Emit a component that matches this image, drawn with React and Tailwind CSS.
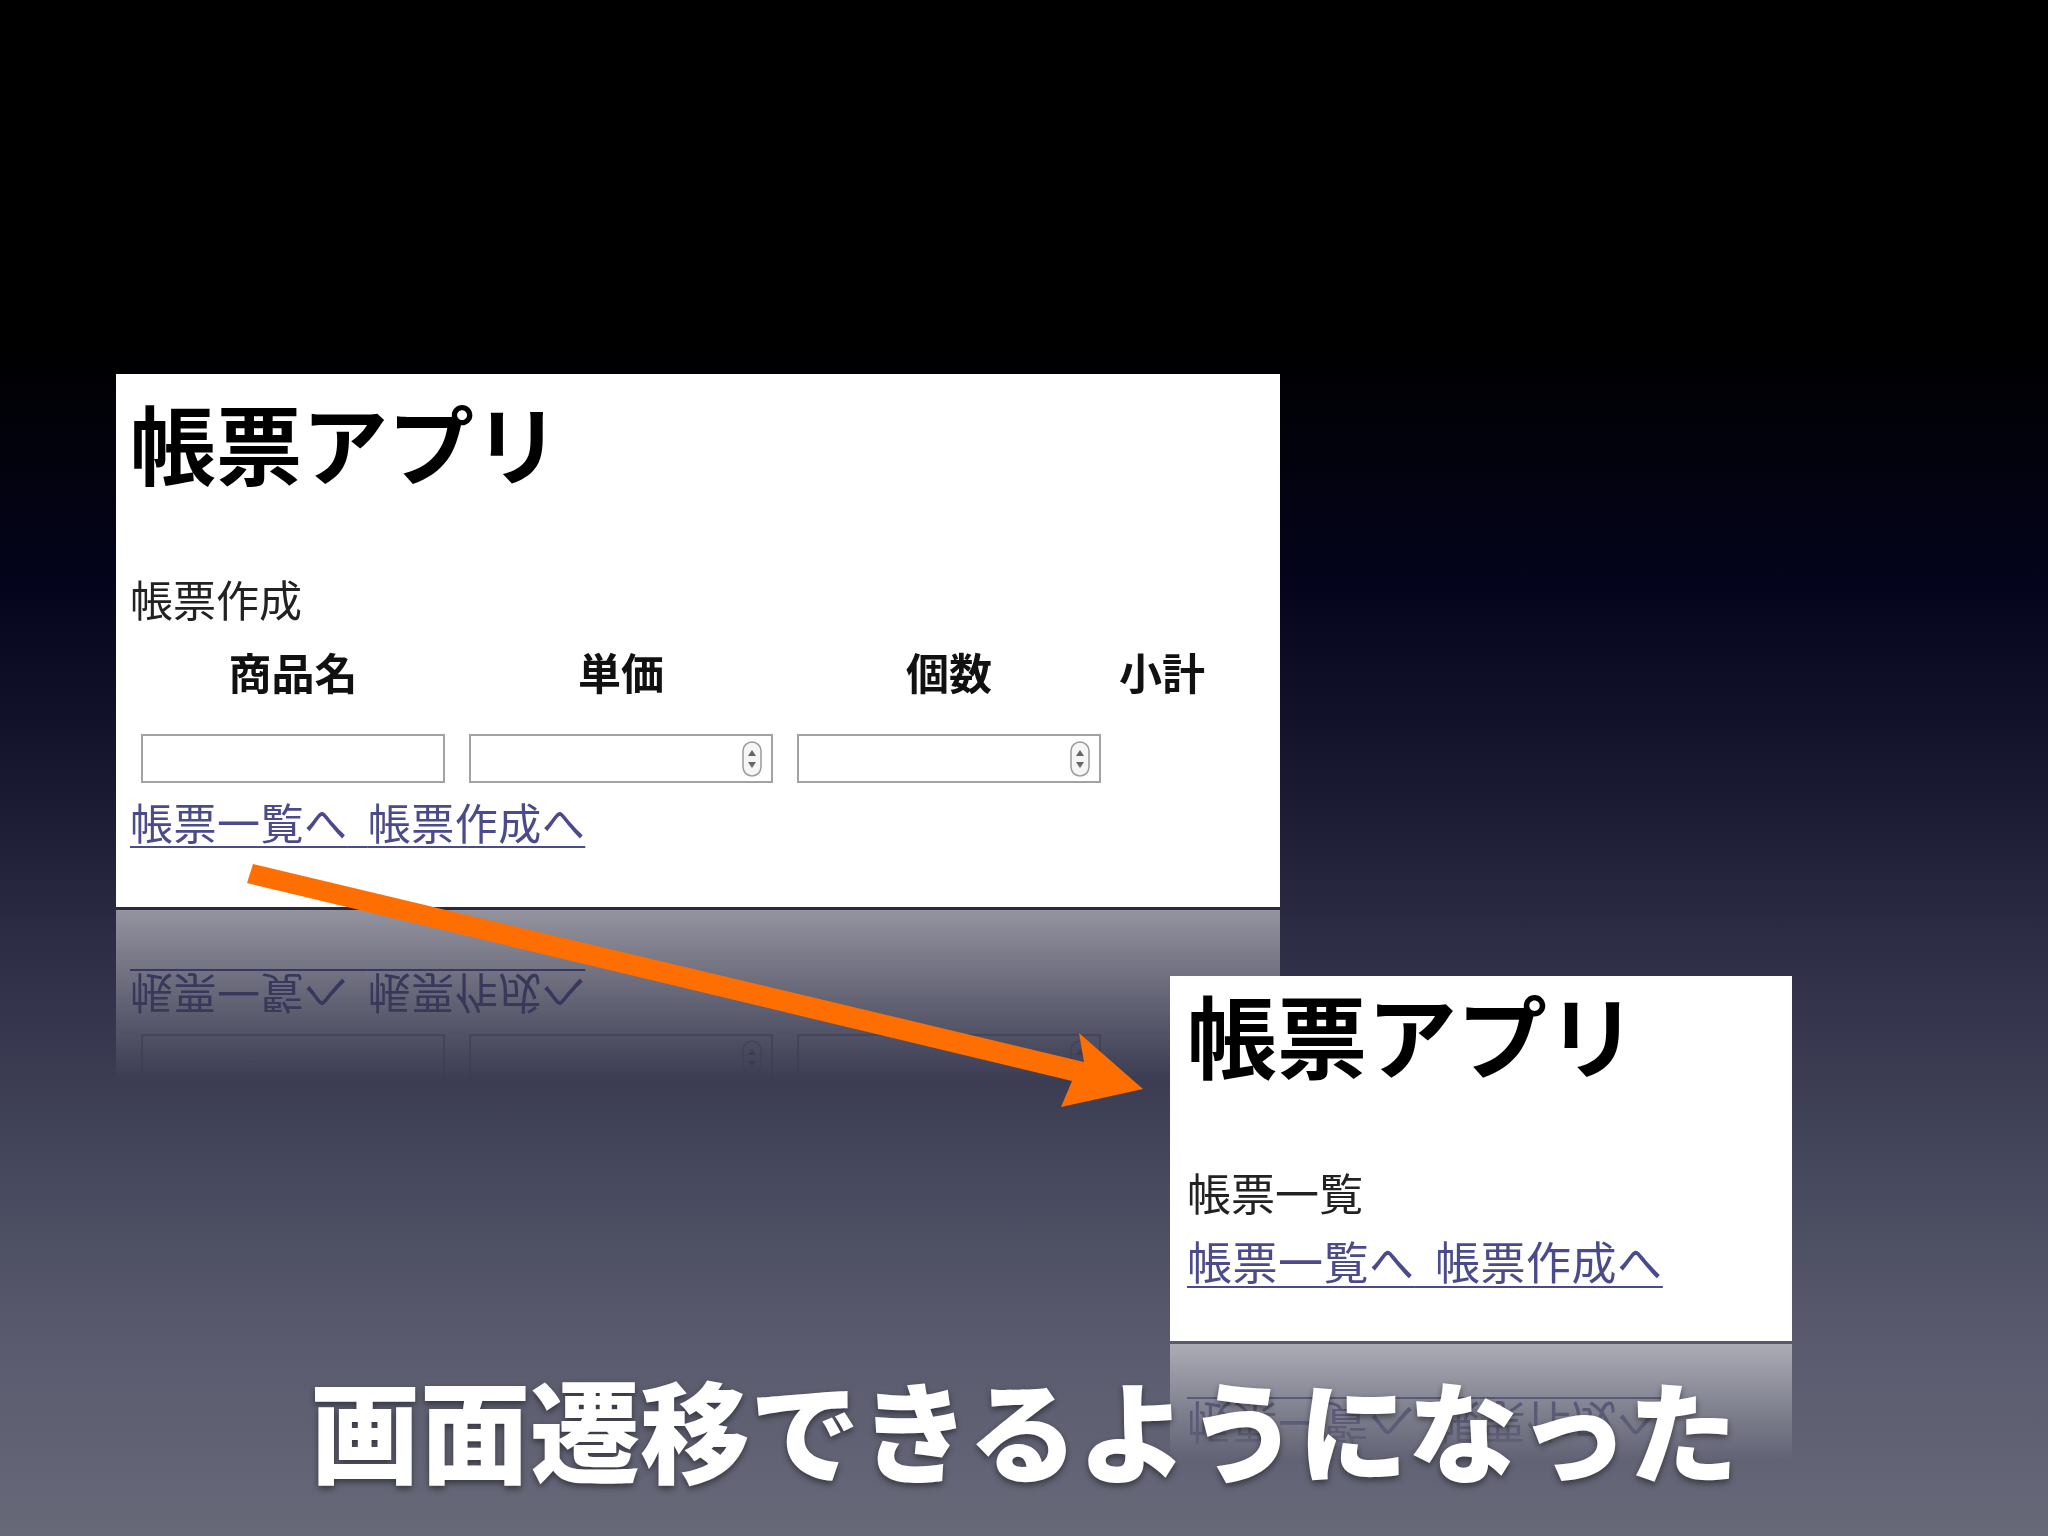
import React from 'react';

const columns = ['商品名', '単価', '個数', '小計'];

const Spinner = () => (
  <svg
    width="20"
    height="36"
    viewBox="0 0 20 36"
    className="absolute right-[11px] top-1/2 -translate-y-1/2"
  >
    <rect x="1" y="1" width="18" height="34" rx="9" fill="#f6f6f6" stroke="#9c9c9c" strokeWidth="1.5" />
    <path d="M10 9 L14 15 L6 15 Z" fill="#666" />
    <path d="M10 27 L14 21 L6 21 Z" fill="#666" />
  </svg>
);

const Field = ({ number }) => (
  <div className="relative w-[304px] h-[49px]">
    <input
      type="text"
      readOnly
      className="w-full h-full border-2 border-[#a2a2a2] bg-white outline-none"
    />
    {number && <Spinner />}
  </div>
);

const NavLinks = ({ size }) => (
  <div
    className={`${size} leading-[1.5] text-[#4b4a8c] underline decoration-2 underline-offset-[6px] tracking-[0.5px] [word-spacing:10px]`}
  >
    <a href="#">帳票一覧へ</a> <a href="#">帳票作成へ</a>
  </div>
);

const reflect =
  '[-webkit-box-reflect:below_3px_linear-gradient(transparent_68%,rgba(255,255,255,0.5))]';

const Arrow = () => (
  <svg
    className="absolute inset-0 pointer-events-none"
    width="2048"
    height="1536"
    viewBox="0 0 2048 1536"
  >
    <polygon
      points="253,864 1084,1062 1079,1033 1143,1089 1061,1107 1072,1081 247,883"
      fill="#ff6e00"
    />
  </svg>
);

export default function App() {
  return (
    <div className="relative w-[2048px] h-[1536px] overflow-hidden font-['Noto_Sans_CJK_JP',sans-serif] bg-[linear-gradient(to_bottom,#000_0%,#000_22%,#04041c_38%,#1a1a33_52%,#2e2e46_62%,#45475c_76%,#5a5b6e_88%,#676878_100%)]">
      <div className="flex flex-col pt-[374px]">
        {/* 帳票作成 screen */}
        <div className={`ml-[116px] w-[1164px] bg-white pl-[14px] pt-[16px] pb-[53px] ${reflect}`}>
          <h1 className="text-[86px] leading-[1.2] font-bold text-black">帳票アプリ</h1>
          <p className="mt-[73px] text-[43px] leading-[1.5] text-[#222]">帳票作成</p>
          <div className="grid grid-cols-[304px_304px_304px_74px] gap-x-[24px] pl-[11px]">
            {columns.map((c) => (
              <div
                key={c}
                className="mt-[8px] flex justify-center whitespace-nowrap text-[43px] leading-[1.5] font-bold text-[#111]"
              >
                {c}
              </div>
            ))}
            <div className="mt-[31px]">
              <Field />
            </div>
            <div className="mt-[31px]">
              <Field number />
            </div>
            <div className="mt-[31px]">
              <Field number />
            </div>
            <div />
          </div>
          <div className="mt-[6px]">
            <NavLinks size="text-[43px]" />
          </div>
        </div>

        {/* 帳票一覧 screen */}
        <div className={`mt-[69px] ml-[1170px] w-[622px] bg-white pl-[17px] pt-[3px] pb-[47px] ${reflect}`}>
          <h1 className="text-[90px] leading-[1.2] font-bold text-black">帳票アプリ</h1>
          <p className="mt-[72px] text-[44px] leading-[1.5] text-[#222]">帳票一覧</p>
          <div className="mt-[2px]">
            <NavLinks size="text-[45px]" />
          </div>
        </div>

        <p className="relative mt-[31px] text-center text-[110px] leading-none font-black text-white [text-shadow:0_3px_6px_rgba(0,0,0,0.45)]">
          画面遷移できるようになった
        </p>
      </div>
      <Arrow />
    </div>
  );
}
